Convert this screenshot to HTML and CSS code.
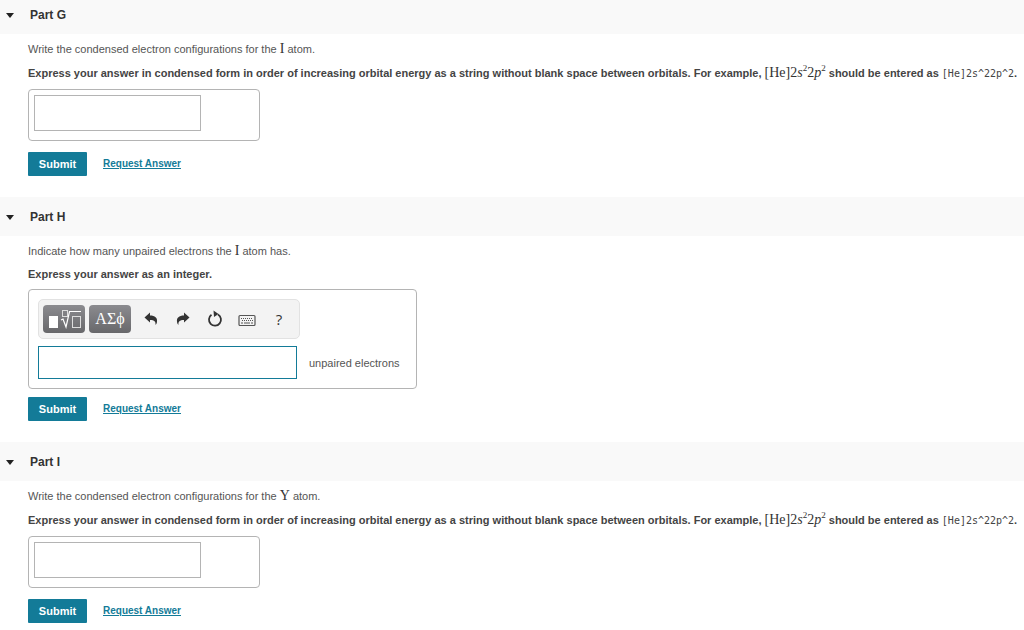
FILE: index.html
```html
<!DOCTYPE html>
<html lang="en">
<head>
    <meta charset="UTF-8">
    <meta name="viewport" content="width=device-width, initial-scale=1.0">
    <title>Electron Configurations</title>
    <link rel="stylesheet" href="styles.css">
</head>
<body>
    <section class="part">
        <button class="part-header part-header-first" type="button" aria-expanded="true"><span class="caret"></span>Part G</button>
        <form class="part-body">
            <p class="question">Write the condensed electron configurations for the <span class="math">I</span> atom.</p>
            <p class="instructions" id="label-g">Express your answer in condensed form in order of increasing orbital energy as a string without blank space between orbitals. For example, <span class="math formula">[He]2<i>s</i><sup>2</sup>2<i>p</i><sup>2</sup></span> should be entered as <code>[He]2s^22p^2</code>.</p>
            <div class="answer-box">
                <input class="answer-input" type="text" aria-labelledby="label-g">
            </div>
            <div class="actions">
                <button class="submit" type="submit">Submit</button>
                <a class="request" href="#">Request Answer</a>
            </div>
        </form>
    </section>

    <section class="part">
        <button class="part-header" type="button" aria-expanded="true"><span class="caret"></span>Part H</button>
        <form class="part-body part-body-compact">
            <p class="question">Indicate how many unpaired electrons the <span class="math">I</span> atom has.</p>
            <p class="instructions">Express your answer as an integer.</p>
            <div class="answer-box answer-box-wide">
                <div class="toolbar">
                    <button class="tool tool-dark" type="button" aria-label="Templates">
                        <svg width="34" height="20" viewBox="0 0 34 20" fill="none" stroke="#fff">
                            <rect x="2" y="7" width="9" height="12" fill="#fff" stroke="none"/>
                            <rect x="15.500" y="1.500" width="5" height="6" stroke="#ddd"/>
                            <path d="M14 11l2-1 3 8 3.500-15.500h11.500" stroke-width="1.200"/>
                            <rect x="25.500" y="7.500" width="8" height="11" stroke="#ddd"/>
                        </svg>
                    </button>
                    <button class="tool tool-dark tool-greek" type="button">ΑΣϕ</button>
                    <button class="tool" type="button" aria-label="Undo">
                        <svg width="14" height="14" viewBox="0 0 14 14">
                            <path d="M.5 5.500L6 .5v3c5 0 7.500 2.500 7 6 0 1.500-.6 2.700-1.500 3.500.4-3.500-1-5-5.500-5v2.500z" fill="#333"/>
                        </svg>
                    </button>
                    <button class="tool" type="button" aria-label="Redo">
                        <svg width="14" height="14" viewBox="0 0 14 14">
                            <path d="M13.500 5.500L8 .5v3c-5 0-7.500 2.500-7 6 0 1.500.6 2.700 1.500 3.500-.4-3.500 1-5 5.500-5v2.500z" fill="#333"/>
                        </svg>
                    </button>
                    <button class="tool" type="button" aria-label="Reset">
                        <svg width="16" height="18" viewBox="0 0 16 18">
                            <path d="M4.500 4.800A6 6 0 1 0 11 4.500" fill="none" stroke="#333" stroke-width="1.800"/>
                            <path d="M6.500 .5l5 3.500-4.500 3z" fill="#333"/>
                        </svg>
                    </button>
                    <button class="tool" type="button" aria-label="Keyboard">
                        <svg width="18" height="16" viewBox="0 0 18 16" fill="none" stroke="#555">
                            <rect x="1" y="4.500" width="16" height="10" rx="1" stroke-width="1.200"/>
                            <path d="M3 7.500h12M4 9.500h11" stroke-dasharray="1 1"/>
                            <path d="M3 12h2M6 12h6M13 12h2"/>
                        </svg>
                    </button>
                    <button class="tool tool-help" type="button">?</button>
                </div>
                <div class="answer-row">
                    <input class="integer-input" type="text" id="electrons">
                    <label for="electrons">unpaired electrons</label>
                </div>
            </div>
            <div class="actions">
                <button class="submit" type="submit">Submit</button>
                <a class="request" href="#">Request Answer</a>
            </div>
        </form>
    </section>

    <section class="part">
        <button class="part-header" type="button" aria-expanded="true"><span class="caret"></span>Part I</button>
        <form class="part-body">
            <p class="question">Write the condensed electron configurations for the <span class="math">Y</span> atom.</p>
            <p class="instructions" id="label-i">Express your answer in condensed form in order of increasing orbital energy as a string without blank space between orbitals. For example, <span class="math formula">[He]2<i>s</i><sup>2</sup>2<i>p</i><sup>2</sup></span> should be entered as <code>[He]2s^22p^2</code>.</p>
            <div class="answer-box">
                <input class="answer-input" type="text" aria-labelledby="label-i">
            </div>
            <div class="actions">
                <button class="submit" type="submit">Submit</button>
                <a class="request" href="#">Request Answer</a>
            </div>
        </form>
    </section>
</body>
</html>
```
FILE: styles.css
```css
:root {
    --teal: #137b98;
    --text: #555;
    --dark: #333;
    --border: #b4b4b4;
}

* {
    box-sizing: border-box;
}

body {
    margin: 0;
    background: #fff;
    color: var(--text);
    font-family: "Liberation Sans", Arial, sans-serif;
    font-size: 11px;
    line-height: 16px;
}

button,
input {
    font-family: inherit;
}

.part-header {
    display: flex;
    align-items: center;
    gap: 16px;
    width: 100%;
    padding: 13px 6px 11px;
    border: none;
    background: #f9f9f9;
    color: var(--dark);
    font-size: 12px;
    font-weight: bold;
    line-height: 15px;
    text-align: left;
}

.part-header-first {
    padding-top: 8px;
}

.caret {
    border: 4px solid transparent;
    border-top: 5px solid #222;
    border-bottom: none;
}

.part-body {
    padding: 7px 0 21px 28px;
}

.question,
.instructions {
    margin: 0 0 8px;
}

.instructions {
    color: #444;
    font-weight: bold;
}

.part-body-compact .question,
.part-body-compact .instructions {
    margin-bottom: 7px;
}

.math {
    color: var(--dark);
    font-family: "Liberation Serif", "Times New Roman", serif;
    font-size: 14px;
    font-weight: normal;
    line-height: 1;
}

.formula sup {
    font-size: 9px;
    line-height: 0;
}

code {
    font-family: "DejaVu Sans Mono", monospace;
    font-size: 10px;
    font-weight: normal;
    line-height: 1;
}

.answer-box {
    width: 232px;
    padding: 5px 5px 9px;
    border: 1px solid var(--border);
    border-radius: 4px;
}

.answer-box-wide {
    width: 389px;
    padding: 9px;
}

.answer-input {
    display: block;
    width: 167px;
    height: 36px;
    border: 1px solid var(--border);
}

.toolbar {
    display: flex;
    align-items: center;
    gap: 4px;
    width: 262px;
    height: 40px;
    padding: 0 4px;
    border: 1px solid #e2e2e2;
    border-radius: 5px;
    background: #f3f3f3;
}

.tool {
    display: flex;
    align-items: center;
    justify-content: center;
    width: 28px;
    height: 28px;
    padding: 0;
    border: none;
    background: none;
    color: var(--dark);
}

.tool-dark {
    width: 42px;
    border-radius: 4px;
    background: linear-gradient(#8b8b8f, #68686b);
    color: #fff;
}

.tool-greek {
    margin-right: 2px;
    font-family: "Liberation Serif", serif;
    font-size: 16px;
}

.tool-help {
    font-family: "Open Sans", sans-serif;
    font-size: 15px;
}

.answer-row {
    display: flex;
    align-items: center;
    gap: 12px;
    margin-top: 7px;
}

.integer-input {
    width: 259px;
    height: 33px;
    border: 1px solid var(--teal);
}

.actions {
    display: flex;
    align-items: center;
    gap: 16px;
    margin-top: 11px;
}

.part-body-compact .actions {
    margin-top: 8px;
}

.submit {
    width: 59px;
    height: 24px;
    padding: 0;
    border: none;
    border-radius: 1px;
    background: var(--teal);
    color: #fff;
    font-size: 11px;
    font-weight: bold;
}

.request {
    color: var(--teal);
    font-size: 10px;
    font-weight: bold;
}
```
